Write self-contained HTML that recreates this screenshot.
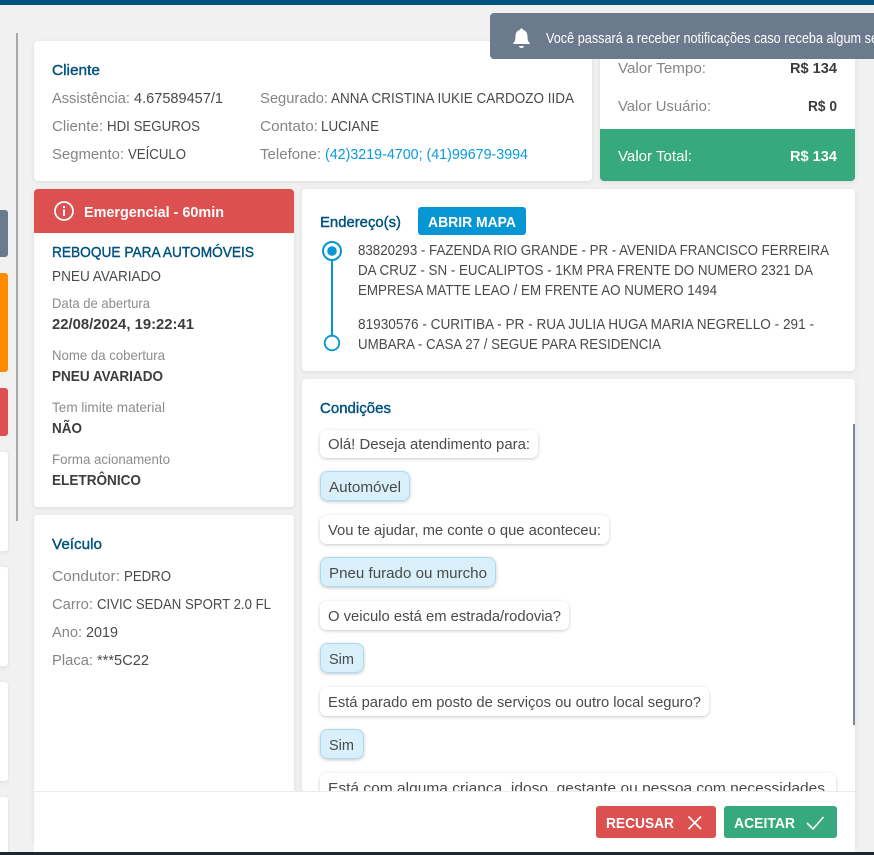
<!DOCTYPE html>
<html lang="pt-BR">
<head>
<meta charset="utf-8">
<title>Atendimento</title>
<style>
html,body{margin:0;padding:0;width:874px;height:855px;overflow:hidden;background:#f1f1f1}
svg{display:block;position:absolute;left:0;top:0}
text{font-family:"Liberation Sans",sans-serif;font-size:15px;fill:#4a4a4a;white-space:pre}
.l{fill:#858585}
.t{fill:#00527f;stroke:#00527f;stroke-width:.4px}
.s{font-size:14px;fill:#8c8c8c}
.b{fill:#3d3d3d;font-weight:700}
.w{fill:#fff}
.wb{fill:#fff;font-weight:700}
.a{fill:#0a9bdc}
</style>
</head>
<body>
<svg width="874" height="855" viewBox="0 0 874 855" xmlns="http://www.w3.org/2000/svg">
<defs>
<filter id="sh" x="-10%" y="-10%" width="120%" height="120%"><feDropShadow dx="0" dy="1" stdDeviation="2.5" flood-color="#000" flood-opacity=".09"/></filter>
<filter id="bs" x="-15%" y="-25%" width="130%" height="160%"><feDropShadow dx="0" dy="1" stdDeviation="1.6" flood-color="#000" flood-opacity=".22"/></filter>
</defs>
<rect width="874" height="855" fill="#f1f1f1"/>
<rect width="874" height="5" fill="#00527f"/>
<rect x="16" y="33" width="2" height="488" fill="#a9a9a9"/>

<!-- left slivers -->
<rect x="-6" y="210" width="14" height="47" rx="3" fill="#6c7a8e"/>
<rect x="-6" y="273" width="14" height="99" rx="3" fill="#ff8c00"/>
<rect x="-6" y="388" width="14" height="48" rx="3" fill="#dc5050"/>
<rect x="-6" y="452" width="14" height="99" rx="3" fill="#fff" filter="url(#sh)"/>
<rect x="-6" y="567" width="14" height="99" rx="3" fill="#fff" filter="url(#sh)"/>
<rect x="-6" y="682" width="14" height="99" rx="3" fill="#fff" filter="url(#sh)"/>
<rect x="-6" y="797" width="14" height="70" rx="3" fill="#fff" filter="url(#sh)"/>

<!-- cliente -->
<rect x="34" y="41" width="558" height="140" rx="4" fill="#fff" filter="url(#sh)"/>
<text class="t" x="52" y="75" textLength="48" lengthAdjust="spacingAndGlyphs">Cliente</text>
<text class="l" x="52" y="103" textLength="78" lengthAdjust="spacingAndGlyphs">Assistência:</text>
<text x="134" y="103" textLength="89" lengthAdjust="spacingAndGlyphs">4.67589457/1</text>
<text class="l" x="52" y="131" textLength="51" lengthAdjust="spacingAndGlyphs">Cliente:</text>
<text x="107" y="131" textLength="93" lengthAdjust="spacingAndGlyphs">HDI SEGUROS</text>
<text class="l" x="52" y="159" textLength="72" lengthAdjust="spacingAndGlyphs">Segmento:</text>
<text x="128" y="159" textLength="58" lengthAdjust="spacingAndGlyphs">VEÍCULO</text>
<text class="l" x="260" y="103" textLength="68" lengthAdjust="spacingAndGlyphs">Segurado:</text>
<text x="331" y="103" textLength="243" lengthAdjust="spacingAndGlyphs">ANNA CRISTINA IUKIE CARDOZO IIDA</text>
<text class="l" x="260" y="131" textLength="58" lengthAdjust="spacingAndGlyphs">Contato:</text>
<text x="321" y="131" textLength="58" lengthAdjust="spacingAndGlyphs">LUCIANE</text>
<text class="l" x="260" y="159" textLength="61" lengthAdjust="spacingAndGlyphs">Telefone:</text>
<text class="a" x="325" y="159" textLength="203" lengthAdjust="spacingAndGlyphs">(42)3219-4700; (41)99679-3994</text>

<!-- valores -->
<rect x="600" y="30" width="255" height="151" rx="4" fill="#fff" filter="url(#sh)"/>
<text class="l" x="618" y="73" textLength="88" lengthAdjust="spacingAndGlyphs">Valor Tempo:</text>
<text class="b" x="790" y="73" textLength="47" lengthAdjust="spacingAndGlyphs">R$ 134</text>
<text class="l" x="618" y="111" textLength="93" lengthAdjust="spacingAndGlyphs">Valor Usuário:</text>
<text class="b" x="808" y="111" textLength="29" lengthAdjust="spacingAndGlyphs">R$ 0</text>
<path d="M600 129H855V177a4 4 0 0 1-4 4H604a4 4 0 0 1-4-4Z" fill="#36a97f"/>
<text class="w" x="618" y="161" textLength="74" lengthAdjust="spacingAndGlyphs">Valor Total:</text>
<text class="wb" x="790" y="161" textLength="47" lengthAdjust="spacingAndGlyphs">R$ 134</text>

<!-- emergencial + servico -->
<rect x="34" y="189" width="260" height="318" rx="4" fill="#fff" filter="url(#sh)"/>
<path d="M34 233V193a4 4 0 0 1 4-4H290a4 4 0 0 1 4 4V233Z" fill="#dc5050"/>
<circle cx="64" cy="211" r="9" fill="none" stroke="#fff" stroke-width="1.8"/>
<rect x="63" y="209.5" width="2" height="6.5" fill="#fff"/>
<rect x="63" y="206" width="2" height="2" fill="#fff"/>
<text class="wb" x="84" y="217" textLength="140" lengthAdjust="spacingAndGlyphs">Emergencial - 60min</text>
<text class="t" x="52" y="257" textLength="202" lengthAdjust="spacingAndGlyphs">REBOQUE PARA AUTOMÓVEIS</text>
<text x="52" y="281" textLength="109" lengthAdjust="spacingAndGlyphs">PNEU AVARIADO</text>
<text class="s" x="52" y="308" textLength="98" lengthAdjust="spacingAndGlyphs">Data de abertura</text>
<text class="b" x="52" y="329" textLength="142" lengthAdjust="spacingAndGlyphs">22/08/2024, 19:22:41</text>
<text class="s" x="52" y="360" textLength="113" lengthAdjust="spacingAndGlyphs">Nome da cobertura</text>
<text class="b" x="52" y="381" textLength="111" lengthAdjust="spacingAndGlyphs">PNEU AVARIADO</text>
<text class="s" x="52" y="412" textLength="113" lengthAdjust="spacingAndGlyphs">Tem limite material</text>
<text class="b" x="52" y="433" textLength="30" lengthAdjust="spacingAndGlyphs">NÃO</text>
<text class="s" x="52" y="464" textLength="118" lengthAdjust="spacingAndGlyphs">Forma acionamento</text>
<text class="b" x="52" y="485" textLength="89" lengthAdjust="spacingAndGlyphs">ELETRÔNICO</text>

<!-- veiculo -->
<rect x="34" y="515" width="260" height="330" rx="4" fill="#fff" filter="url(#sh)"/>
<text class="t" x="52" y="549" textLength="50" lengthAdjust="spacingAndGlyphs">Veículo</text>
<text class="l" x="52" y="581" textLength="68" lengthAdjust="spacingAndGlyphs">Condutor:</text>
<text x="124" y="581" textLength="47" lengthAdjust="spacingAndGlyphs">PEDRO</text>
<text class="l" x="52" y="609" textLength="41" lengthAdjust="spacingAndGlyphs">Carro:</text>
<text x="97" y="609" textLength="174" lengthAdjust="spacingAndGlyphs">CIVIC SEDAN SPORT 2.0 FL</text>
<text class="l" x="52" y="637" textLength="30" lengthAdjust="spacingAndGlyphs">Ano:</text>
<text x="86" y="637" textLength="32" lengthAdjust="spacingAndGlyphs">2019</text>
<text class="l" x="52" y="665" textLength="41" lengthAdjust="spacingAndGlyphs">Placa:</text>
<text x="97" y="665" textLength="52" lengthAdjust="spacingAndGlyphs">***5C22</text>

<!-- enderecos -->
<rect x="302" y="189" width="553" height="182" rx="4" fill="#fff" filter="url(#sh)"/>
<text class="t" x="320" y="227" textLength="81" lengthAdjust="spacingAndGlyphs">Endereço(s)</text>
<rect x="418" y="207" width="108" height="28" rx="3" fill="#0795d3"/>
<text class="wb" x="428" y="227" textLength="88" lengthAdjust="spacingAndGlyphs">ABRIR MAPA</text>
<rect x="331" y="260" width="2" height="76" fill="#0795d3"/>
<circle cx="332" cy="251" r="9" fill="#fff" stroke="#0795d3" stroke-width="2"/>
<circle cx="332" cy="251" r="4.8" fill="#0795d3"/>
<circle cx="332" cy="343" r="7.3" fill="#fff" stroke="#0795d3" stroke-width="1.8"/>
<text x="358" y="255" textLength="471" lengthAdjust="spacingAndGlyphs">83820293 - FAZENDA RIO GRANDE - PR - AVENIDA FRANCISCO FERREIRA</text>
<text x="358" y="275" textLength="455" lengthAdjust="spacingAndGlyphs">DA CRUZ - SN - EUCALIPTOS - 1KM PRA FRENTE DO NUMERO 2321 DA</text>
<text x="358" y="295" textLength="359" lengthAdjust="spacingAndGlyphs">EMPRESA MATTE LEAO / EM FRENTE AO NUMERO 1494</text>
<text x="358" y="329" textLength="456" lengthAdjust="spacingAndGlyphs">81930576 - CURITIBA - PR - RUA JULIA HUGA MARIA NEGRELLO - 291 -</text>
<text x="358" y="349" textLength="303" lengthAdjust="spacingAndGlyphs">UMBARA - CASA 27 / SEGUE PARA RESIDENCIA</text>

<!-- condicoes -->
<rect x="302" y="379" width="553" height="470" rx="4" fill="#fff" filter="url(#sh)"/>
<text class="t" x="320" y="413" textLength="71" lengthAdjust="spacingAndGlyphs">Condições</text>
<rect x="853" y="424" width="2" height="301" fill="#7c8798"/>

<rect x="320" y="430" width="218" height="28" rx="7" fill="#fff" filter="url(#bs)"/>
<text x="328" y="449" textLength="202" lengthAdjust="spacingAndGlyphs">Olá! Deseja atendimento para:</text>
<rect x="320.500" y="471.500" width="89" height="29" rx="7" fill="#d9eff9" stroke="#a9dcf2" filter="url(#bs)"/>
<text x="329" y="492" textLength="72" lengthAdjust="spacingAndGlyphs">Automóvel</text>
<rect x="320" y="515" width="289" height="29" rx="7" fill="#fff" filter="url(#bs)"/>
<text x="328" y="535" textLength="273" lengthAdjust="spacingAndGlyphs">Vou te ajudar, me conte o que aconteceu:</text>
<rect x="320.500" y="557.500" width="175" height="29" rx="7" fill="#d9eff9" stroke="#a9dcf2" filter="url(#bs)"/>
<text x="329" y="578" textLength="158" lengthAdjust="spacingAndGlyphs">Pneu furado ou murcho</text>
<rect x="320" y="601" width="249" height="29" rx="7" fill="#fff" filter="url(#bs)"/>
<text x="328" y="621" textLength="233" lengthAdjust="spacingAndGlyphs">O veiculo está em estrada/rodovia?</text>
<rect x="320.500" y="643.500" width="43" height="29" rx="7" fill="#d9eff9" stroke="#a9dcf2" filter="url(#bs)"/>
<text x="329" y="664" textLength="25" lengthAdjust="spacingAndGlyphs">Sim</text>
<rect x="320" y="687" width="389" height="29" rx="7" fill="#fff" filter="url(#bs)"/>
<text x="328" y="707" textLength="373" lengthAdjust="spacingAndGlyphs">Está parado em posto de serviços ou outro local seguro?</text>
<rect x="320.500" y="729.500" width="43" height="29" rx="7" fill="#d9eff9" stroke="#a9dcf2" filter="url(#bs)"/>
<text x="329" y="750" textLength="25" lengthAdjust="spacingAndGlyphs">Sim</text>
<rect x="320" y="773" width="516" height="50" rx="7" fill="#fff" filter="url(#bs)"/>
<text x="328" y="793" textLength="497" lengthAdjust="spacingAndGlyphs">Está com alguma criança, idoso, gestante ou pessoa com necessidades</text>

<!-- rodape -->
<rect x="34" y="792" width="821" height="60" fill="#fff"/>
<rect x="34" y="791" width="821" height="1" fill="#ececec"/>
<rect x="596" y="806" width="120" height="32" rx="3" fill="#dc5050"/>
<text class="wb" x="606" y="828" textLength="68" lengthAdjust="spacingAndGlyphs">RECUSAR</text>
<path d="M688.500 816.500L701 829M701 816.500L688.500 829" fill="none" stroke="#fff" stroke-width="1.6"/>
<rect x="724" y="806" width="113" height="32" rx="3" fill="#36a97f"/>
<text class="wb" x="734" y="828" textLength="61" lengthAdjust="spacingAndGlyphs">ACEITAR</text>
<path d="M807 823L813 829L823.500 817" fill="none" stroke="#fff" stroke-width="1.6"/>
<rect y="852" width="874" height="3" fill="#1e2630"/>

<!-- notificacao -->
<path d="M874 13H494a4 4 0 0 0-4 4V55a4 4 0 0 0 4 4H874Z" fill="#6c7a8e"/>
<path d="M521.500 28.500c1 0 1.700.7 1.700 1.500c3 .8 4.300 3.200 4.300 6.500c0 3 .6 5 2.200 6.500v1H513.300v-1c1.600-1.500 2.200-3.500 2.200-6.500c0-3.300 1.300-5.700 4.300-6.500c0-.8.700-1.500 1.700-1.500Z" fill="#fff"/>
<path d="M519 46h5a2.500 2 0 0 1-5 0Z" fill="#fff"/>
<text class="w" x="546" y="43" textLength="332" lengthAdjust="spacingAndGlyphs">Você passará a receber notificações caso receba algum se</text>
</svg>
</body>
</html>
